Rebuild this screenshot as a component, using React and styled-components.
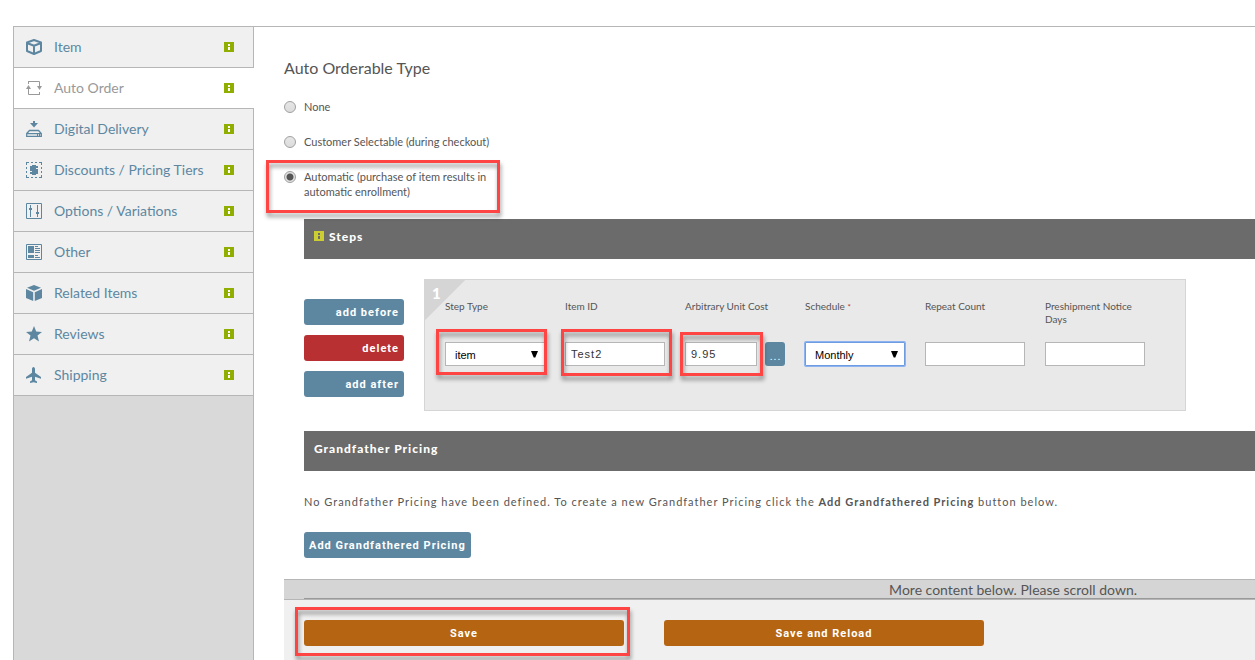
import React from "react";

import styled, { createGlobalStyle, css } from "styled-components";

const colors = {
  blue: "#5d87a1",
  red: "#b93032",
  orange: "#b56512",
  green: "#8fae00",
  lime: "#cccc33",
  mark: "#ff4444",
  line: "#b6b6b6",
  bar: "#6b6b6b",
  text: "#555555",
}

const GlobalStyle = createGlobalStyle`
  * {
    box-sizing: border-box;
  }

  body {
    margin: 0;
    background-color: white;
    color: ${colors.text};
    font-family: Lato, "Liberation Sans", sans-serif;
    font-size: 11px;
  }
`

const Page = styled.div`
  display: flex;
  flex-direction: column;
  height: 100vh;
  padding: 26px 0 0 13px;
  overflow: hidden;
`

const Columns = styled.div`
  flex: 1;
  display: flex;
  min-height: 0;
  border-top: 1px solid ${colors.line};
`

const SideNav = styled.nav`
  flex: none;
  width: 241px;
  background-color: #d9d9d9;
  border-left: 1px solid ${colors.line};
  border-right: 1px solid ${colors.line};
`

const NavItem = styled.a`
  display: flex;
  align-items: center;
  gap: 12px;
  height: 41px;
  padding: 0 19px 0 12px;
  background-color: #f0f0f0;
  border-bottom: 1px solid ${colors.line};
  color: ${colors.blue};
  font-size: 14px;
  text-decoration: none;

  svg {
    flex: none;
  }

  span {
    flex: 1;
    padding-bottom: 2px;
  }

  ${props =>
    props.$active &&
    css`
      margin-right: -1px;
      padding-right: 20px;
      background-color: white;
      color: #999999;
    `}
`

const Main = styled.main`
  flex: 1;
  min-width: 0;
  display: flex;
  flex-direction: column;
  padding-left: 30px;
`

const Content = styled.div`
  flex: 1;
  min-height: 0;
  padding-top: 31px;
`

const Title = styled.h1`
  margin: 0 0 21px;
  font-size: 16px;
  font-weight: 400;
  line-height: 20px;
`

const Choices = styled.div`
  display: flex;
  flex-direction: column;
  align-items: flex-start;
  gap: 20px;
  margin-bottom: 20px;
`

const Choice = styled.label`
  position: relative;
  display: flex;
  gap: 8px;
  max-width: 216px;
  line-height: 15px;
`

const Radio = styled.input`
  appearance: none;
  flex: none;
  width: 12px;
  height: 12px;
  margin: 2px 0 0;
  border: 1px solid #a0a0a0;
  border-radius: 50%;
  background: linear-gradient(#e6e6e6, #dcdcdc);

  &:checked {
    background: radial-gradient(circle, #555555 0 3px, #e2e2e2 4px);
  }
`

// Red frame laid over a control; $inset is top, right, bottom, left
const Mark = styled.i`
  position: absolute;
  inset: ${props => props.$inset};
  border: 3px solid ${colors.mark};
  filter: drop-shadow(1px 4px 2px rgba(0, 0, 0, 0.4));
  pointer-events: none;
  z-index: 1;
`

const Marked = styled.div`
  position: relative;
  display: flex;
  flex: ${props => props.$flex || "none"};
`

const Section = styled.section`
  margin-left: 20px;
`

const SectionTitle = styled.h2`
  display: flex;
  align-items: flex-start;
  gap: 5px;
  height: 40px;
  margin: 0;
  padding: 10px;
  background-color: ${colors.bar};
  color: white;
  font-size: 12px;
  font-weight: 900;
  letter-spacing: 1px;
  line-height: 16px;

  svg {
    margin-top: 2px;
  }
`

const Step = styled.div`
  display: flex;
  align-items: flex-start;
  gap: 20px;
  padding: 20px 0;
`

const StepActions = styled.div`
  display: flex;
  flex-direction: column;
  flex: none;
  width: 100px;
  gap: 10px;
  padding-top: 20px;
`

const Button = styled.button`
  height: 26px;
  padding: 0 5px;
  border: 0;
  border-radius: 3px;
  background-color: ${props => props.$color || colors.blue};
  color: white;
  font: bold 11px Roboto, "Liberation Sans", sans-serif;
  letter-spacing: 1px;
  text-align: ${props => props.$align || "center"};
`

const StepPanel = styled.div`
  position: relative;
  display: flex;
  gap: 20px;
  padding: 20px 40px 44px 20px;
  background: linear-gradient(135deg, #d5d5d5 0 28px, #e9e9e9 29px);
  border: 1px solid #d5d5d5;
`

const StepNumber = styled.b`
  position: absolute;
  top: 3px;
  left: 7px;
  color: white;
  font-size: 15px;
  font-weight: 900;
  line-height: 20px;
`

const Field = styled.div`
  width: 100px;
`

const FieldLabel = styled.label`
  display: block;
  height: 26px;
  margin-bottom: 16px;
  font-size: 10px;
  line-height: 13px;
  white-space: ${props => (props.$wrap ? "normal" : "nowrap")};
`

const Required = styled.span`
  color: ${colors.red};
  font-size: 8px;
`

const controlStyle = css`
  width: 100%;
  height: 24px;
  border: 1px solid ${colors.line};
  border-radius: 0;
  background-color: white;
  font-family: "Liberation Sans", Arial, sans-serif;
  font-size: 11px;
`

const TextBox = styled.input`
  ${controlStyle}
  padding: 0 5px;
  color: #333333;
  letter-spacing: 1px;
`

const Select = styled.select`
  ${controlStyle}
  appearance: none;
  padding: 2px 9px 0;
  color: black;

  ${props =>
    props.$focused &&
    css`
      border-color: #6f9be0;
      box-shadow: 0 0 0 1px #8db4f0;
      border-radius: 1px;
    `}
`

const Arrow = styled.svg`
  position: absolute;
  top: 9px;
  right: 7px;
  pointer-events: none;
`

const CostRow = styled.div`
  display: flex;
  gap: 8px;
`

const MoreButton = styled(Button)`
  width: 20px;
  height: 24px;
  padding: 4px 0 0 1px;
  font-weight: 400;
`

const Message = styled.p`
  margin: 23px 0 22px;
  letter-spacing: 1px;
  line-height: 16px;
`

const Footer = styled.footer`
  flex: none;
  background-color: #f0f0f0;
`

const Notice = styled.div`
  padding-left: 20px;
  background-color: #d5d5d5;
  border-top: 1px solid ${colors.line};
  border-bottom: 1px solid ${colors.line};

  p {
    margin: 0;
    padding: 2px 118px 0 0;
    border-bottom: 1px solid #999999;
    font-size: 14px;
    line-height: 16px;
    text-align: right;
  }
`

const FooterActions = styled.div`
  display: flex;
  gap: 40px;
  padding: 20px 20px 14px;
`

const SaveButton = styled(Button)`
  width: 320px;
`

const Icon = ({ children }) => (
  <svg width="16" height="16" viewBox="0 0 16 16" fill="currentColor" aria-hidden="true">
    {children}
  </svg>
)

const InfoIcon = ({ color = colors.green, mark = "white" }) => (
  <svg width="10" height="10" viewBox="0 0 10 10" aria-hidden="true">
    <path fill={color} d="M0 0h10v10H0z" />
    <path fill={mark} d="M4 2h2v2H4zM4 5h2v3H4z" />
  </svg>
)

const DropArrow = () => (
  <Arrow width="7" height="7" viewBox="0 0 7 7" aria-hidden="true">
    <path d="M0 0h7L4.300 6.500H2.700z" />
  </Arrow>
)

const navItems = [
  {
    label: "Item",
    icon: <path fill="none" stroke="currentColor" strokeWidth="2" strokeLinejoin="round" d="M8 1l7 2.500v8.500L8 15l-7-3V3.500zM1 4l7 2.700L15 4M8 6.700V15" />,
  },
  {
    label: "Auto Order",
    active: true,
    icon: (
      <>
        <path fill="none" stroke="currentColor" d="M2 1.500h11.500V7M2.500 1v3M2.500 8v6.500h11.500M13.500 12v3" />
        <path d="M0 9l2.500-4L5 9zM11 6h5l-2.500 4z" />
      </>
    ),
  },
  {
    label: "Digital Delivery",
    icon: (
      <>
        <path d="M7 0h2v2h3L8 6.500 4 2h3z" />
        <path fill="none" stroke="currentColor" strokeWidth="1.300" d="M.7 12.500L3.500 9.500h9l2.800 3v2.800H.7zM.7 12.700h14.600M11 14h1M13 14h1" />
      </>
    ),
  },
  {
    label: "Discounts / Pricing Tiers",
    icon: (
      <>
        <path fill="none" stroke="currentColor" d="M0 .5h3M5 .5h2M9 .5h2M13 .5h3M0 15.500h3M5 15.500h2M9 15.500h2M13 15.500h3M.5 0v3M.5 5v2M.5 9v2M.5 13v3M15.500 0v3M15.500 5v2M15.500 9v2M15.500 13v3" />
        <path fill="none" stroke="currentColor" strokeWidth="2" d="M12 5H5v3h6v3H4M7 3v10M9 3v10" />
      </>
    ),
  },
  {
    label: "Options / Variations",
    icon: (
      <>
        <path fill="none" stroke="currentColor" d="M.5 .5h15v15H.5zM4.500 2v12M11.500 2v12" />
        <path d="M3 5h3v2H3zM10 9h3v2h-3z" />
      </>
    ),
  },
  {
    label: "Other",
    icon: (
      <>
        <path fill="none" stroke="currentColor" d="M.5 .5h15v15H.5zM9 2.500h3M9 4.500h5M9 6.500h5M9 8.500h5M9 11.500h3M9 13.500h5" />
        <path d="M2 2h6v7H2zM2 11h6v3H2z" />
      </>
    ),
  },
  {
    label: "Related Items",
    icon: <path d="M8 0l7 2.700L8 5.800 1 2.700zM0 4l7.200 3.200V16L0 13zM16 4L8.800 7.200V16L16 13z" />,
  },
  {
    label: "Reviews",
    icon: <path d="M8 0l2.200 5.600 5.800.3-4.500 3.700L13 15.500 8 12.200 3 15.500l1.500-5.900L0 5.900l5.800-.3z" />,
  },
  {
    label: "Shipping",
    icon: <path d="M7.500 0C8.400 0 9 1 9 2v3.700l6 4.300v1.800L9 9.800v3.400l2 1.400V16l-3.500-.8L4 16v-1.400l2-1.400V9.800l-6 2V10l6-4.300V2c0-1 .6-2 1.500-2z" />,
  },
]

const App = () => {
  return (
    <>
      <GlobalStyle />
      <Page>
        <Columns>
          <SideNav>
            {navItems.map(item => (
              <NavItem href="#" key={item.label} $active={item.active}>
                <Icon>{item.icon}</Icon>
                <span>{item.label}</span>
                <InfoIcon />
              </NavItem>
            ))}
          </SideNav>

          <Main>
            <Content>
              <Title>Auto Orderable Type</Title>
              <Choices>
                <Choice>
                  <Radio type="radio" name="type" />
                  <span>None</span>
                </Choice>
                <Choice>
                  <Radio type="radio" name="type" />
                  <span>Customer Selectable (during checkout)</span>
                </Choice>
                <Choice>
                  <Radio type="radio" name="type" defaultChecked />
                  <span>Automatic (purchase of item results in automatic enrollment)</span>
                  <Mark $inset="-9px 0 -14px -18px" />
                </Choice>
              </Choices>

              <Section>
                <SectionTitle>
                  <InfoIcon color={colors.lime} mark={colors.bar} />
                  Steps
                </SectionTitle>
                <Step>
                  <StepActions>
                    <Button $align="right">add before</Button>
                    <Button $align="right" $color={colors.red}>delete</Button>
                    <Button $align="right">add after</Button>
                  </StepActions>
                  <StepPanel>
                    <StepNumber>1</StepNumber>
                    <Field>
                      <FieldLabel htmlFor="stepType">Step Type</FieldLabel>
                      <Marked>
                        <Select id="stepType" defaultValue="item">
                          <option>item</option>
                        </Select>
                        <DropArrow />
                        <Mark $inset="-13px -2px -9px -9px" />
                      </Marked>
                    </Field>
                    <Field>
                      <FieldLabel htmlFor="itemId">Item ID</FieldLabel>
                      <Marked>
                        <TextBox id="itemId" defaultValue="Test2" />
                        <Mark $inset="-13px -7px -10px -4px" />
                      </Marked>
                    </Field>
                    <Field>
                      <FieldLabel htmlFor="unitCost">Arbitrary Unit Cost</FieldLabel>
                      <CostRow>
                        <Marked $flex="1">
                          <TextBox id="unitCost" defaultValue="9.95" />
                          <Mark $inset="-10px -6px -10px -5px" />
                        </Marked>
                        <MoreButton>...</MoreButton>
                      </CostRow>
                    </Field>
                    <Field>
                      <FieldLabel htmlFor="schedule">
                        Schedule <Required>*</Required>
                      </FieldLabel>
                      <Marked>
                        <Select id="schedule" defaultValue="Monthly" $focused>
                          <option>Monthly</option>
                        </Select>
                        <DropArrow />
                      </Marked>
                    </Field>
                    <Field>
                      <FieldLabel htmlFor="repeatCount">Repeat Count</FieldLabel>
                      <TextBox id="repeatCount" />
                    </Field>
                    <Field>
                      <FieldLabel htmlFor="noticeDays" $wrap>Preshipment Notice Days</FieldLabel>
                      <TextBox id="noticeDays" />
                    </Field>
                  </StepPanel>
                </Step>
              </Section>

              <Section>
                <SectionTitle>Grandfather Pricing</SectionTitle>
                <Message>
                  No Grandfather Pricing have been defined. To create a new Grandfather Pricing click
                  the <b>Add Grandfathered Pricing</b> button below.
                </Message>
                <Button>Add Grandfathered Pricing</Button>
              </Section>
            </Content>

            <Footer>
              <Notice>
                <p>More content below. Please scroll down.</p>
              </Notice>
              <FooterActions>
                <Marked>
                  <SaveButton $color={colors.orange}>Save</SaveButton>
                  <Mark $inset="-13px -6px -10px -9px" />
                </Marked>
                <SaveButton $color={colors.orange}>Save and Reload</SaveButton>
              </FooterActions>
            </Footer>
          </Main>
        </Columns>
      </Page>
    </>
  )
}

export default App
